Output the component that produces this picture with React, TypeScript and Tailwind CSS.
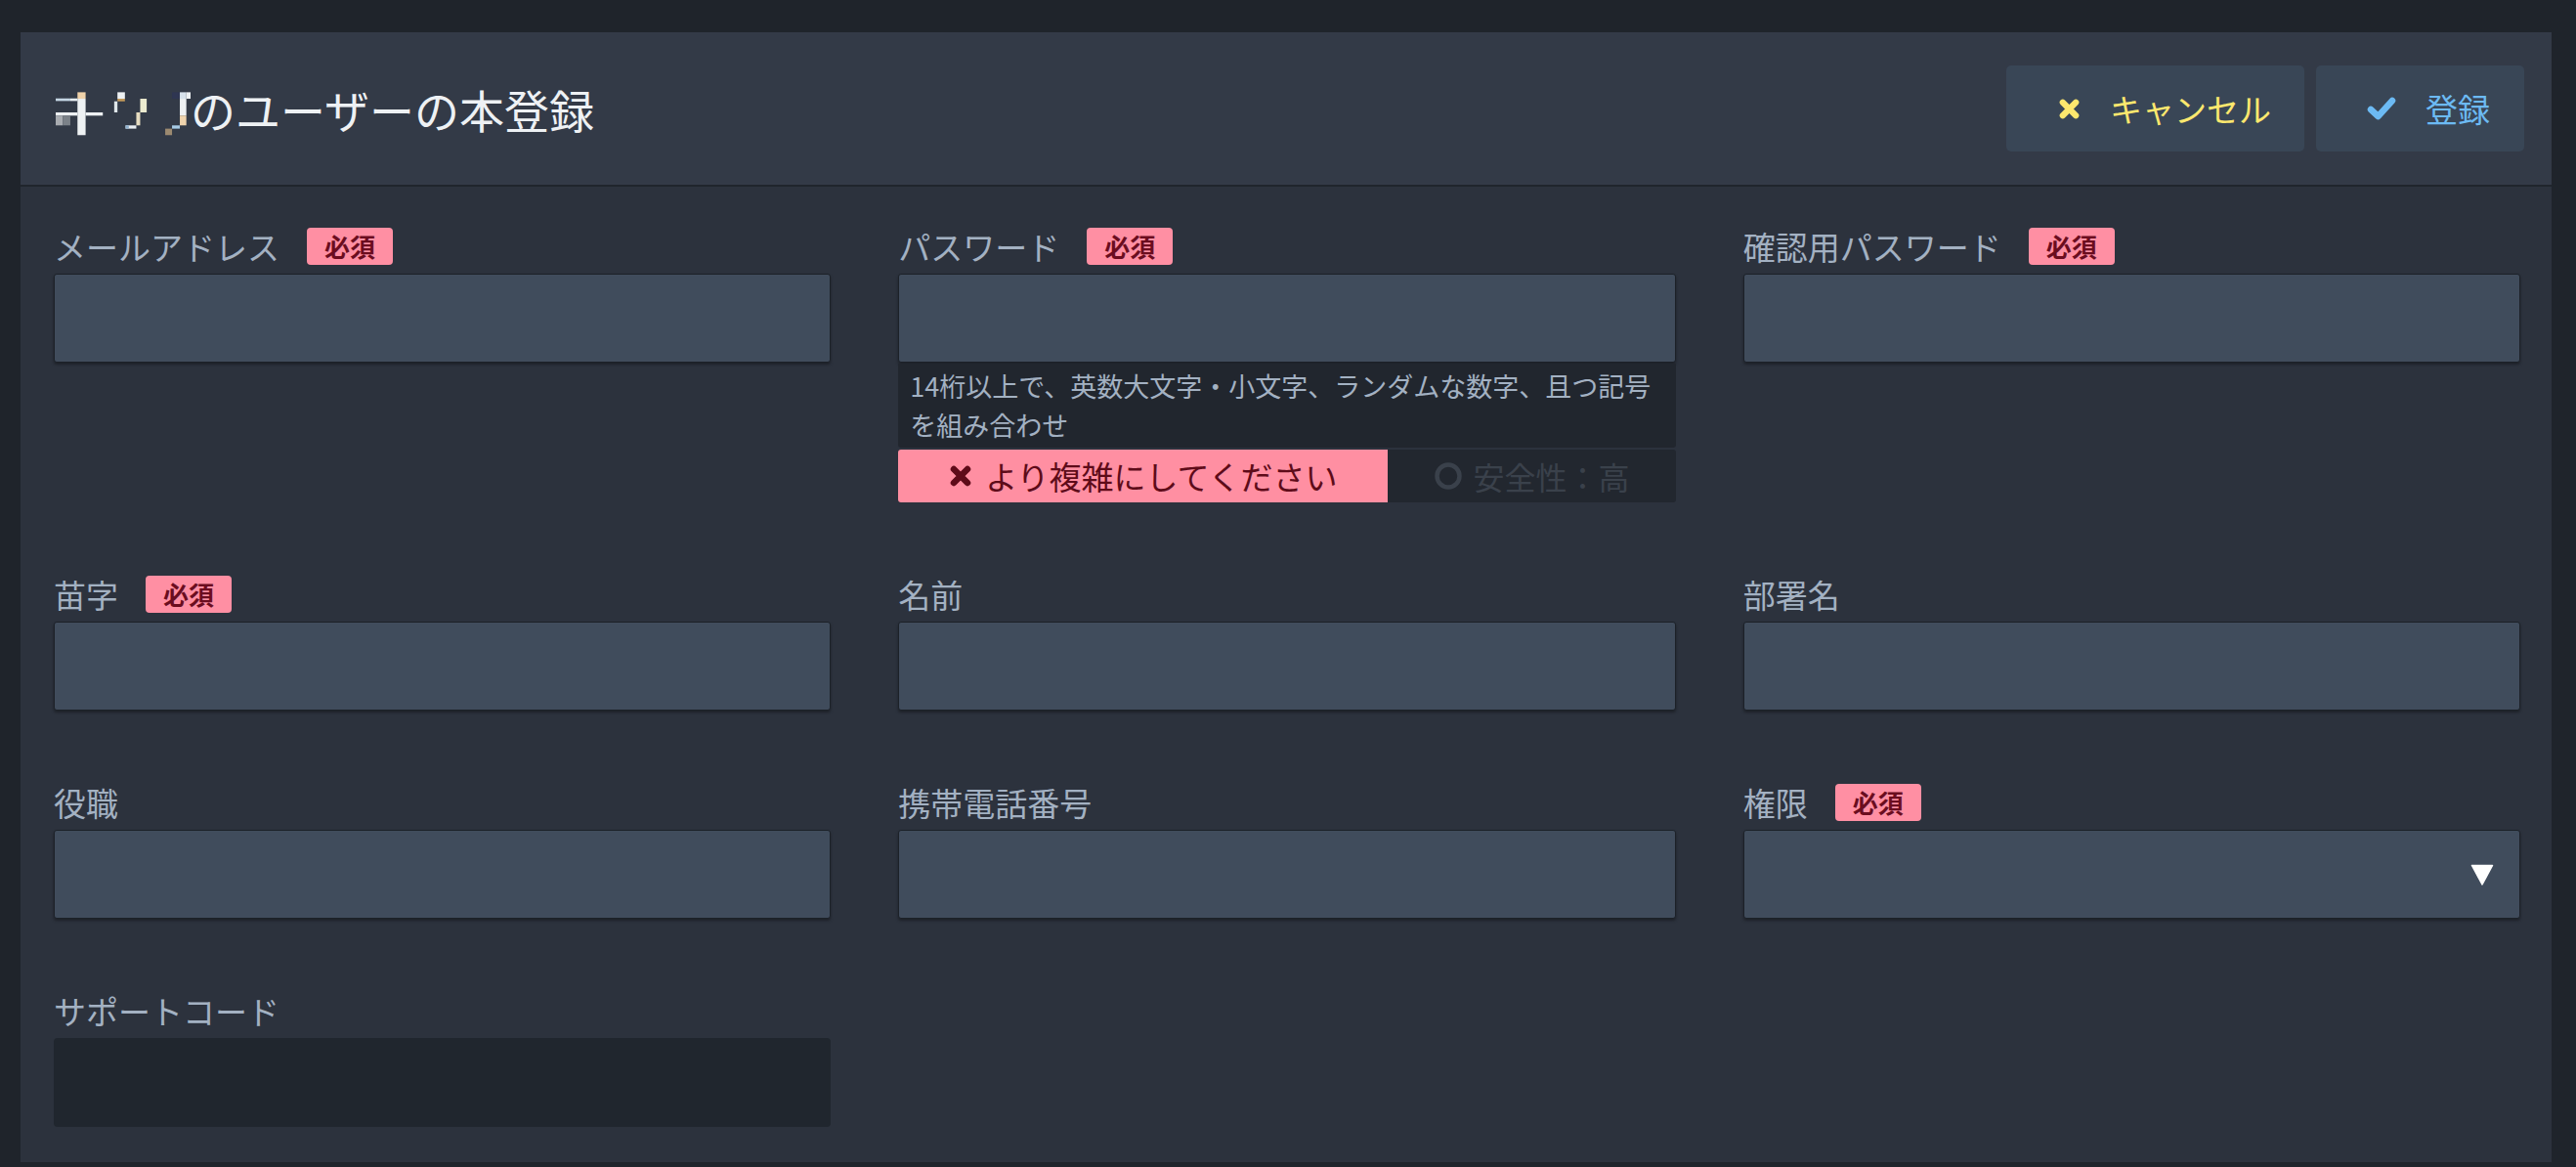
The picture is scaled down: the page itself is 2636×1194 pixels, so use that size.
import React from "react";

const FONT = "font-['Noto_Sans_CJK_JP','Noto_Sans',sans-serif]";

function Badge() {
  return (
    <span className="inline-flex h-[38px] items-center rounded-[4px] bg-[#ff8fa3] px-[18px] text-[26px] font-bold leading-none text-[#6b0d1f]">
      必須
    </span>
  );
}

function Label({ text, required }: { text: string; required?: boolean }) {
  return (
    <div className="flex h-[38px] items-center gap-[28px]">
      <span className="text-[33px] leading-none text-[#a3b1c2]">{text}</span>
      {required && <Badge />}
    </div>
  );
}

function Input({ children }: { children?: React.ReactNode }) {
  return (
    <div className="mt-[9px] flex h-[91px] items-center justify-end rounded-[3px] border border-[#1c2128] bg-[#404c5c] pr-[26px] shadow-[0_2px_3px_rgba(0,0,0,0.35)]">
      {children}
    </div>
  );
}

function Field({ label, required, children }: { label: string; required?: boolean; children?: React.ReactNode }) {
  return (
    <div className="flex flex-col">
      <Label text={label} required={required} />
      {children ?? <Input />}
    </div>
  );
}

function XIcon({ size, color }: { size: number; color: string }) {
  return (
    <svg width={size} height={size} viewBox="0 0 24 24" className="shrink-0">
      <path d="M5 5 L19 19 M19 5 L5 19" stroke={color} strokeWidth={6.5} strokeLinecap="round" fill="none" />
    </svg>
  );
}

function Mosaic() {
  const r: [number, number, number, number, string][] = [
    [170, 302, 45, 8, "#c5d6e4"],
    [215, 302, 22, 8, "#e8eef2"],
    [237, 283, 25, 20, "#f0d2aa"],
    [237, 303, 25, 112, "#eef1f3"],
    [170, 345, 67, 10, "#eef1f3"],
    [262, 345, 53, 10, "#eef1f3"],
    [170, 355, 22, 30, "#a8abb0"],
    [192, 355, 23, 30, "#7b8188"],
    [360, 283, 23, 20, "#eef1f3"],
    [360, 303, 23, 8, "#c49a5a"],
    [350, 311, 10, 34, "#dfe6ea"],
    [430, 303, 20, 42, "#ecebd0"],
    [418, 345, 12, 40, "#e6dcc0"],
    [385, 385, 33, 10, "#e9eef2"],
    [385, 385, 10, 10, "#8fb0cf"],
    [528, 283, 24, 20, "#2f3652"],
    [552, 283, 20, 20, "#d8e2ec"],
    [572, 283, 13, 20, "#eef1f3"],
    [552, 303, 20, 52, "#eef1f3"],
    [552, 355, 20, 30, "#efd3ad"],
    [528, 385, 24, 10, "#a7cbe6"],
    [507, 395, 21, 20, "#9c8a70"],
  ];
  return (
    <svg width={138} height={46} viewBox="170 264 415 138" overflow="visible" className="block shrink-0">
      {r.map(([x, y, w, h, c], i) => (
        <rect key={i} x={x} y={y} width={w} height={h} fill={c} />
      ))}
    </svg>
  );
}

export default function App() {
  return (
    <div className={`${FONT} min-h-[1194px] bg-[#1f242b] pl-[21px] pr-[25px] pt-[33px]`}>
      <div className="bg-[#2c323d]">
        {/* header */}
        <div className="flex h-[158px] items-center justify-between border-b-2 border-[#20252c] bg-[#333a47] pl-[36px] pr-[28px]">
          <div className="flex h-[46px] items-center">
            <Mosaic />
            <span className="text-[46px] leading-[46px] text-[#eef1f4]">のユーザーの本登録</span>
          </div>
          <div className="flex gap-[12px]">
            <button className="flex h-[88px] items-center whitespace-nowrap rounded-[5px] bg-[#394656] pl-[53px] pr-[34px] text-[33px] text-[#fde86e]">
              <XIcon size={23} color="#fde86e" />
              <span className="ml-[30px] leading-none">キャンセル</span>
            </button>
            <button className="flex h-[88px] items-center whitespace-nowrap rounded-[5px] bg-[#394656] pl-[52px] pr-[35px] text-[33px] text-[#6cbaf3]">
              <svg width={30} height={26} viewBox="0 0 30 26" className="shrink-0">
                <path d="M4 14 L11.5 21 L26 5" stroke="#6cbaf3" strokeWidth={6.5} strokeLinecap="round" strokeLinejoin="round" fill="none" />
              </svg>
              <span className="ml-[30px] leading-none">登録</span>
            </button>
          </div>
        </div>

        {/* body */}
        <div className="grid grid-cols-3 gap-x-[69px] gap-y-[75px] pb-[36px] pl-[34px] pr-[32px] pt-[42px]">
          <Field label="メールアドレス" required />
          <Field label="パスワード" required>
            <Input />
            <div className="mt-[1px] rounded-b-[3px] bg-[#21262e] px-[12px] py-[3px] text-[27px] leading-[40px] text-[#a3b1c2]">
              14桁以上で、英数大文字・小文字、ランダムな数字、且つ記号を組み合わせ
            </div>
            <div className="mt-[2px] flex h-[54px] overflow-hidden rounded-[3px] bg-[#22272f]">
              <div className="flex w-[63%] items-center justify-center gap-[13px] bg-[#ff8fa2] text-[33px] leading-none text-[#5e0b19]">
                <XIcon size={24} color="#5e0b19" />
                <span>より複雑にしてください</span>
              </div>
              <div className="flex flex-1 items-center justify-center gap-[12px] text-[32px] leading-none text-[#3a414b]">
                <svg width={28} height={28} viewBox="0 0 28 28" className="shrink-0">
                  <circle cx={14} cy={14} r={11.5} stroke="#3a414b" strokeWidth={4.5} fill="none" />
                </svg>
                <span>安全性：高</span>
              </div>
            </div>
          </Field>
          <Field label="確認用パスワード" required />

          <Field label="苗字" required />
          <Field label="名前" />
          <Field label="部署名" />

          <Field label="役職" />
          <Field label="携帯電話番号" />
          <Field label="権限" required>
            <Input>
              <svg width={24} height={22} viewBox="0 0 24 22">
                <path d="M1.5 1.5 L22.5 1.5 L12 21 Z" fill="#ffffff" stroke="#ffffff" strokeWidth={1.5} strokeLinejoin="round" />
              </svg>
            </Input>
          </Field>

          <Field label="サポートコード">
            <div className="mt-[9px] h-[91px] rounded-[4px] bg-[#20262e]" />
          </Field>
        </div>
      </div>
    </div>
  );
}
